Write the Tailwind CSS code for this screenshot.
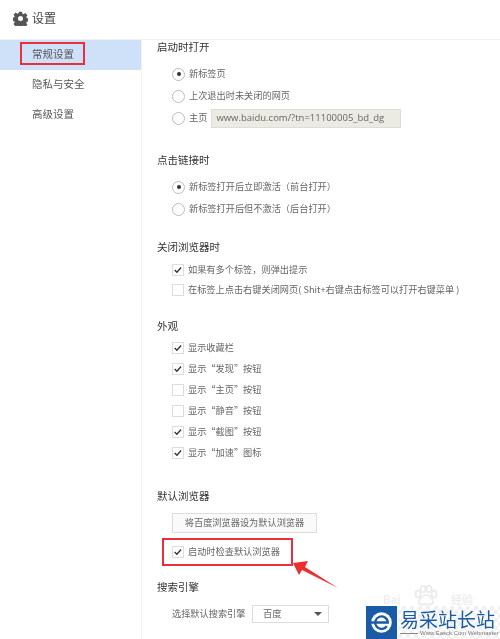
<!DOCTYPE html>
<html lang="zh">
<head>
    <meta charset="UTF-8">
    <title>设置</title>
    <script src="https://cdn.jsdelivr.net/npm/@tailwindcss/browser@4"></script>
</head>
<body class="bg-white overflow-hidden">
<div class="relative w-[500px] h-[639px] overflow-hidden font-['Noto_Sans_CJK_SC','Noto_Sans',sans-serif] text-[9.200px] text-[#666] blur-[0.5px]">
    <!-- header -->
    <div class="h-[40px] flex items-center gap-[4px] pl-[13px] pb-[3px] border-b border-[#f0f0f0]">
        <svg class="w-[15px] h-[15px]" viewBox="0 0 24 24" fill="#555"><path fill-rule="evenodd" d="M9.500 1h5l.6 3.300 1.700.7 2.800-1.900 3.500 3.500-1.900 2.800.7 1.700 3.300.6v5l-3.300.6-.7 1.700 1.900 2.800-3.500 3.500-2.800-1.900-1.700.7-.6 3.300h-5l-.6-3.300-1.700-.7-2.800 1.900L.8 20.700l1.900-2.800-.7-1.700-3.300-.6v-5l3.300-.6.7-1.700L.8 5.900l3.500-3.500 2.800 1.900 1.700-.7zM12 8a4 4 0 1 0 0 8 4 4 0 0 0 0-8z"/></svg>
        <span class="text-[12px] text-[#444]">设置</span>
    </div>

    <div class="flex">
        <!-- sidebar -->
        <div class="w-[142px] h-[599px] shrink-0 border-r border-[#f1f1fa] text-[10.500px] text-[#555]">
            <div class="h-[30px] pl-[32px] pb-[2px] flex items-center bg-[#cfe0f9]">常规设置</div>
            <div class="h-[30px] pl-[32px] pb-[2px] flex items-center">隐私与安全</div>
            <div class="h-[30px] pl-[32px] pb-[2px] flex items-center">高级设置</div>
        </div>

        <!-- content -->
        <div class="pl-[15px] flex-1">
            <h2 class="h-[14px] flex items-center text-[10.500px] text-[#333]">启动时打开</h2>
            <div class="mt-[9px] pl-[15px]">
                <label class="h-[22px] flex items-center gap-[4px]"><span class="w-[13px] h-[13px] rounded-full border border-[#bbb] flex items-center justify-center"><span class="w-[4px] h-[4px] rounded-full bg-[#333]"></span></span>新标签页</label>
                <label class="h-[22px] flex items-center gap-[4px]"><span class="w-[13px] h-[13px] rounded-full border border-[#bbb]"></span>上次退出时未关闭的网页</label>
                <label class="h-[22px] flex items-center gap-[4px]"><span class="w-[13px] h-[13px] rounded-full border border-[#bbb]"></span>主页<span class="ml-[0px] w-[190px] h-[19px] flex items-center pl-[4px] bg-[#ebebe4] border border-[#ddd] font-['Open_Sans',sans-serif] text-[9.500px] text-[#666]">www.baidu.com/?tn=11100005_bd_dg</span></label>
            </div>

            <h2 class="mt-[24px] h-[14px] flex items-center text-[10.500px] text-[#333]">点击链接时</h2>
            <div class="mt-[9px] pl-[15px]">
                <label class="h-[22px] flex items-center gap-[4px]"><span class="w-[13px] h-[13px] rounded-full border border-[#bbb] flex items-center justify-center"><span class="w-[4px] h-[4px] rounded-full bg-[#333]"></span></span>新标签打开后立即激活（前台打开）</label>
                <label class="h-[22px] flex items-center gap-[4px]"><span class="w-[13px] h-[13px] rounded-full border border-[#bbb]"></span>新标签打开后但不激活（后台打开）</label>
            </div>

            <h2 class="mt-[20px] h-[14px] flex items-center text-[10.500px] text-[#333]">关闭浏览器时</h2>
            <div class="mt-[6px] pl-[15px]">
                <label class="h-[20px] flex items-center gap-[4px]"><svg class="w-[12px] h-[12px] border border-[#ddd]" viewBox="0 0 12 12" fill="none" stroke="#333" stroke-width="1.600"><path d="M2 6l2.700 2.700 5-5.700"/></svg>如果有多个标签，则弹出提示</label>
                <label class="h-[20px] flex items-center gap-[4px]"><span class="w-[12px] h-[12px] border border-[#ddd]"></span>在标签上点击右键关闭网页( Shit+右键点击标签可以打开右键菜单 )</label>
            </div>

            <h2 class="mt-[19px] h-[14px] flex items-center text-[10.500px] text-[#333]">外观</h2>
            <div class="mt-[4px] pl-[15px]">
                <label class="h-[21px] flex items-center gap-[4px]"><svg class="w-[12px] h-[12px] border border-[#ddd]" viewBox="0 0 12 12" fill="none" stroke="#333" stroke-width="1.600"><path d="M2 6l2.700 2.700 5-5.700"/></svg>显示收藏栏</label>
                <label class="h-[21px] flex items-center gap-[4px]"><svg class="w-[12px] h-[12px] border border-[#ddd]" viewBox="0 0 12 12" fill="none" stroke="#333" stroke-width="1.600"><path d="M2 6l2.700 2.700 5-5.700"/></svg>显示“发现”按钮</label>
                <label class="h-[21px] flex items-center gap-[4px]"><span class="w-[12px] h-[12px] border border-[#ddd]"></span>显示“主页”按钮</label>
                <label class="h-[21px] flex items-center gap-[4px]"><span class="w-[12px] h-[12px] border border-[#ddd]"></span>显示“静音”按钮</label>
                <label class="h-[21px] flex items-center gap-[4px]"><svg class="w-[12px] h-[12px] border border-[#ddd]" viewBox="0 0 12 12" fill="none" stroke="#333" stroke-width="1.600"><path d="M2 6l2.700 2.700 5-5.700"/></svg>显示“截图”按钮</label>
                <label class="h-[21px] flex items-center gap-[4px]"><svg class="w-[12px] h-[12px] border border-[#ddd]" viewBox="0 0 12 12" fill="none" stroke="#333" stroke-width="1.600"><path d="M2 6l2.700 2.700 5-5.700"/></svg>显示“加速”图标</label>
            </div>

            <h2 class="mt-[26px] h-[14px] flex items-center text-[10.500px] text-[#333]">默认浏览器</h2>
            <div class="mt-[10px] pl-[15px]">
                <div class="w-[145px] h-[20px] flex items-center justify-center border border-[#ddd] bg-[#fafafa]">将百度浏览器设为默认浏览器</div>
                <label class="mt-[9px] h-[20px] flex items-center gap-[4px]"><svg class="w-[12px] h-[12px] border border-[#ddd]" viewBox="0 0 12 12" fill="none" stroke="#333" stroke-width="1.600"><path d="M2 6l2.700 2.700 5-5.700"/></svg>启动时检查默认浏览器</label>
            </div>

            <h2 class="mt-[18px] h-[14px] flex items-center text-[10.500px] text-[#333]">搜索引擎</h2>
            <div class="mt-[11px] pl-[15px] flex items-center">
                <span class="w-[80px]">选择默认搜索引擎</span>
                <div class="w-[77px] h-[18px] flex items-center justify-between pl-[10px] pr-[6px] border border-[#ddd]">百度<span class="w-0 h-0 border-x-[4px] border-x-transparent border-t-[4px] border-t-[#555]"></span></div>
            </div>
        </div>
    </div>

    <!-- annotations -->
    <div class="absolute left-[20px] top-[42px] w-[65px] h-[23px] border-2 border-[#e8303a]"></div>
    <div class="absolute left-[162px] top-[538px] w-[131px] h-[28px] border-2 border-[#e8303a]"></div>
    <svg class="absolute left-0 top-0 w-[500px] h-[639px]" viewBox="0 0 500 639"><path d="M293 563L308 561L305 567L338 588L302 570L299 575Z" fill="#ec3030"/></svg>

    <!-- watermark -->
    <div class="absolute left-[383px] top-[594px] w-[90px] h-[11px] flex justify-between text-[11px] leading-none text-[#eeeeee] font-bold"><span>Bai</span><span>经验</span></div>
    <svg class="absolute left-[413px] top-[585px] w-[26px] h-[21px]" viewBox="0 0 26 21" fill="none" stroke="#ececec" stroke-width="2"><ellipse cx="5" cy="9" rx="2.500" ry="3.500"/><ellipse cx="10" cy="4" rx="2.500" ry="3.200"/><ellipse cx="16" cy="4" rx="2.500" ry="3.200"/><ellipse cx="21" cy="9" rx="2.500" ry="3.500"/><path d="M13 10c-4 0-7 4-7 7 0 3 4 3 7 2 3 1 7 1 7-2 0-3-3-7-7-7z"/></svg>
    <div class="absolute left-[366px] top-[606px] w-[134px] h-[33px] overflow-hidden flex bg-[repeating-conic-gradient(#f1f1f1_0_25%,#fff_0_50%)] bg-[length:8px_8px]">
        <div class="w-[31px] h-[33px] shrink-0 bg-[#1a5ba6] flex items-center justify-center">
            <svg class="w-[21px] h-[21px]" viewBox="0 0 20 20" fill="none"><circle cx="10" cy="10" r="9.800" fill="#fff"/><path d="M15 13.500A6 6 0 1 1 16 10H0" stroke="#1a5ba6" stroke-width="2.200"/></svg>
        </div>
        <div class="pl-[3px] w-[100px] flex flex-col shrink-0">
            <span class="text-[19px] leading-[25px] text-[#1a5ba6] whitespace-nowrap">易采站长站</span>
            <div class="flex items-center gap-[2px] -mt-[1px]"><span class="w-[18px] h-px shrink-0 bg-[#888]"></span><span class="font-['Liberation_Sans',sans-serif] text-[6px] leading-[7px] text-[#777] whitespace-nowrap">Www.Easck.Com Webmaster</span></div>
        </div>
    </div>
</div>
</body>
</html>
